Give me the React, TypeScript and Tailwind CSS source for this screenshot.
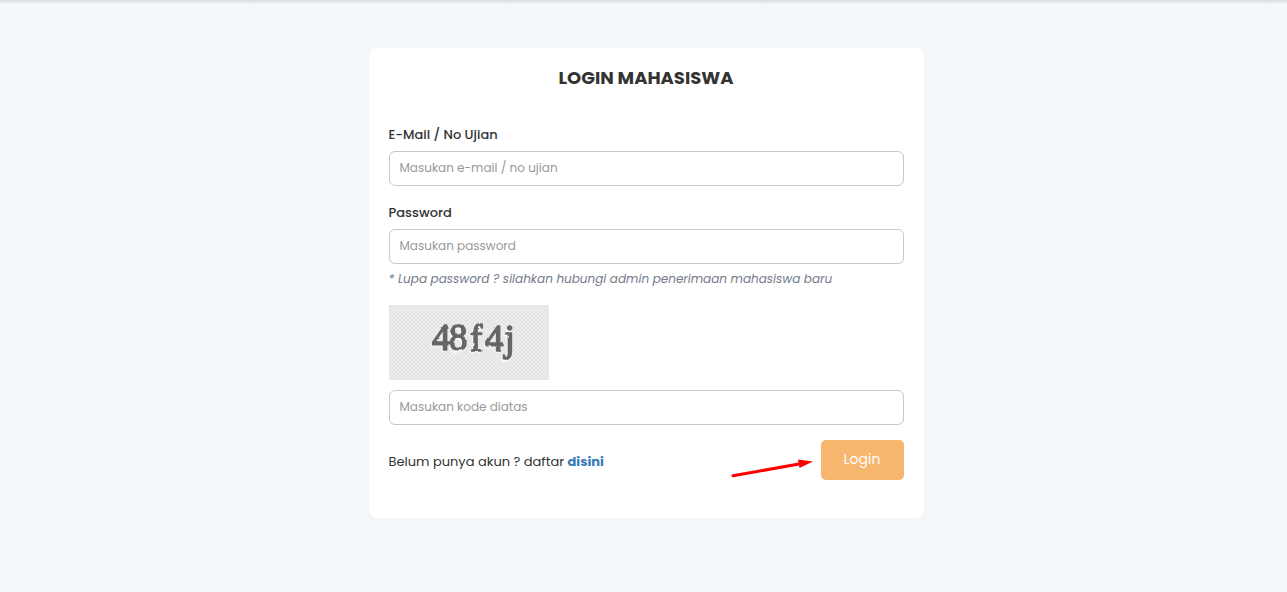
import React from "react";

type FieldProps = { id: string; placeholder: string; type?: string };

function Field({ id, placeholder, type = "text" }: FieldProps) {
  return (
    <input
      id={id}
      type={type}
      placeholder={placeholder}
      className="block h-[35px] w-full rounded-[6px] border border-[#c8c8c8] bg-white px-[10px] pb-[2px] text-[12px] text-[#333] outline-none placeholder:text-[#999]"
    />
  );
}

const glyphs = [
  { char: "4", x: 43, y: 44.5 },
  { char: "8", x: 60, y: 45 },
  { char: "f", x: 81, y: 45.5 },
  { char: "4", x: 96, y: 45.5 },
  { char: "j", x: 115.5, y: 46 },
];

function Captcha() {
  return (
    <svg width="160" height="75" viewBox="0 0 160 75" className="mt-4 block" role="img" aria-label="48f4j">
      <defs>
        <pattern id="check" width="4" height="4" patternUnits="userSpaceOnUse">
          <rect width="4" height="4" fill="#ededed" />
          <rect width="2" height="2" fill="#e4e4e4" />
          <rect x="2" y="2" width="2" height="2" fill="#e4e4e4" />
        </pattern>
        <filter id="rough">
          <feTurbulence type="fractalNoise" baseFrequency="0.16" numOctaves="2" seed="7" />
          <feDisplacementMap in="SourceGraphic" scale="2.5" xChannelSelector="R" yChannelSelector="G" />
        </filter>
      </defs>
      <rect width="160" height="75" fill="url(#check)" />
      <g fontFamily="Liberation Serif, serif" fontSize="37" strokeWidth="1.5" strokeLinejoin="round" filter="url(#rough)">
        <g fill="#fafafa" stroke="#fafafa">
          {glyphs.map((g, i) => (
            <text key={i} x={g.x - 1} y={g.y + 1.5}>{g.char}</text>
          ))}
        </g>
        <g fill="#666" stroke="#666">
          {glyphs.map((g, i) => (
            <text key={i} x={g.x} y={g.y}>{g.char}</text>
          ))}
        </g>
      </g>
    </svg>
  );
}

export default function App() {
  return (
    <main className="flex h-[592px] w-full flex-col bg-[#f3f7fa] font-['Poppins','Inter',sans-serif] text-[#333]">
      <div className="h-[4px] shrink-0 bg-linear-to-b from-[#d9dde0] to-[#f3f7fa]" />
      <form
        onSubmit={(e) => e.preventDefault()}
        className="mt-[44px] ml-[368.5px] h-[470px] w-[555px] rounded-[8px] bg-white px-5 pt-[18px]"
      >
        <h1 className="text-center text-[18px] leading-6 font-bold">LOGIN MAHASISWA</h1>
        <label htmlFor="email" className="mt-[35px] mb-[6px] block text-[13px] leading-5 font-medium">
          E-Mail / No Ujian
        </label>
        <Field id="email" placeholder="Masukan e-mail / no ujian" />
        <label htmlFor="password" className="mt-[17px] mb-[6px] block text-[13px] leading-5 font-medium">
          Password
        </label>
        <Field id="password" type="password" placeholder="Masukan password" />
        <p className="mt-[5px] text-[12px] leading-5 whitespace-nowrap text-[#747b8a] italic">
          * Lupa password ? silahkan hubungi admin penerimaan mahasiswa baru
        </p>
        <Captcha />
        <div className="mt-[10px]">
          <Field id="code" placeholder="Masukan kode diatas" />
        </div>
        <div className="mt-[15px] flex h-10 items-center">
          <p className="pt-[3px] text-[13px] leading-5 whitespace-nowrap">
            Belum punya akun ? daftar{" "}
            <a href="#" className="font-bold text-[#337ab7]">disini</a>
          </p>
          <svg width="84" height="24" viewBox="0 0 84 24" className="mt-[16px] mr-[8px] ml-auto">
            <path d="M4 19.8 70 8" stroke="#f00" strokeWidth="3" strokeLinecap="round" />
            <path d="M69 3.5 84 5.5 70.5 12Z" fill="#f00" />
          </svg>
          <button className="h-10 w-[83px] rounded-[5px] bg-[#f7b66d] pb-[2px] text-[14px] text-white">Login</button>
        </div>
      </form>
    </main>
  );
}
